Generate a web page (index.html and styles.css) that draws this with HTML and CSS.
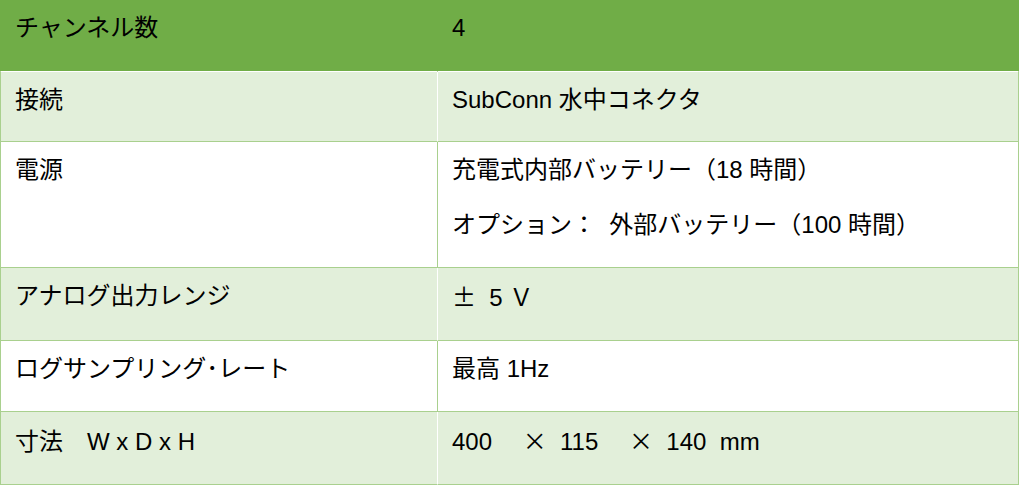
FILE: index.html
```html
<!DOCTYPE html>
<html lang="ja">
<head>
<meta charset="utf-8">
<title>仕様</title>
<link rel="stylesheet" href="styles.css">
</head>
<body>
<table class="spec">
  <tr class="head">
    <td class="k">チャンネル数</td>
    <td class="v">4</td>
  </tr>
  <tr class="band first">
    <td class="k">接続</td>
    <td class="v">SubConn 水中コネクタ</td>
  </tr>
  <tr class="plain">
    <td class="k">電源</td>
    <td class="v"><p>充電式内部バッテリー（18 時間）</p><p class="next">オプション：  外部バッテリー（100 時間）</p></td>
  </tr>
  <tr class="band">
    <td class="k">アナログ出力レンジ</td>
    <td class="v"><span class="cjk">±</span>  5 <span class="cjk">Ｖ</span></td>
  </tr>
  <tr class="plain">
    <td class="k">ログサンプリング･レート</td>
    <td class="v">最高 1Hz</td>
  </tr>
  <tr class="band">
    <td class="k">寸法<span class="cjk">　</span>W x D x H</td>
    <td class="v">400 <span class="cjk">　×</span>  115 <span class="cjk">　×</span>  140  mm</td>
  </tr>
</table>
</body>
</html>
```

FILE: styles.css
```css
html, body {
  margin: 0;
  padding: 0;
  background: #ffffff;
}

body {
  font-family: "Liberation Sans", "Noto Sans CJK JP", sans-serif;
  font-size: 24px;
  color: #000000;
}

.spec {
  border-collapse: separate;
  border-spacing: 0;
  width: 1019px;
  table-layout: fixed;
}

.spec td {
  vertical-align: top;
  padding: 10px 14px 24px 14px;
  line-height: 36px;
  white-space: pre;
  border-bottom: 1px solid #a9d08e;
}

.spec td.k {
  width: 408px;
  border-left: 1px solid #a9d08e;
  border-right: 1px solid #a9d08e;
}

.spec td.v {
  border-right: 1px solid #a9d08e;
}

.spec p {
  margin: 0;
}

.spec p.next {
  margin-top: 19px;
}

.head td {
  background: #70ad47;
  padding-bottom: 25px;
  border-bottom: 1px solid #ffffff;
}

.head td.k {
  border-left-color: #70ad47;
  border-right-color: #70ad47;
}

.head td.v {
  border-right-color: #70ad47;
}

.band td {
  background: #e2efda;
}

.band td.k {
  border-right-color: #ffffff;
}

.first td {
  padding-bottom: 23px;
}

.cjk {
  font-family: "Noto Sans CJK JP", sans-serif;
}
```
